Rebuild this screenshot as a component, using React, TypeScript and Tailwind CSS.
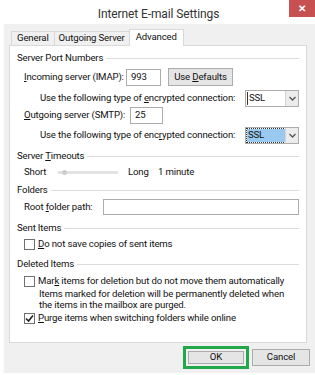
import React from "react";

const font = { fontFamily: 'Roboto, "Noto Sans", sans-serif' };

function U({ children }: { children: React.ReactNode }) {
  return <span className="underline underline-offset-[1px]">{children}</span>;
}

function Header({ children }: { children: React.ReactNode }) {
  return (
    <div className="flex items-center h-[16px]">
      <span className="whitespace-nowrap">{children}</span>
      <div className="flex-1 h-px bg-[#dcdcdc] ml-[3px]" />
    </div>
  );
}

function Select({ focused }: { focused?: boolean }) {
  return (
    <div className="flex w-[54px] h-[17px] border border-[#acacac] bg-white shrink-0">
      <div className="flex-1 flex items-center pl-[1px] py-[1px]">
        {focused ? (
          <div className="w-full h-full bg-[#99c9ef] outline outline-1 outline-dotted outline-[#333] flex items-center pl-[1px] leading-none">
            SSL
          </div>
        ) : (
          <div className="flex items-center h-full border-l border-[#333] pl-[1px] leading-none">SSL</div>
        )}
      </div>
      <div className="w-[13px] bg-[#ececec] border-l border-[#d5d5d5] flex items-center justify-center">
        <svg width="7" height="5" viewBox="0 0 7 5">
          <path d="M0.5 1 L3.5 4 L6.5 1" stroke="#555" strokeWidth="1.3" fill="none" />
        </svg>
      </div>
    </div>
  );
}

function Check({ checked }: { checked?: boolean }) {
  return (
    <div className="w-[11px] h-[11px] border border-[#707070] bg-white flex items-center justify-center shrink-0">
      {checked && (
        <svg width="9" height="9" viewBox="0 0 9 9">
          <path d="M1 4.5 L3.5 7 L8 1.5" stroke="#222" strokeWidth="1.6" fill="none" />
        </svg>
      )}
    </div>
  );
}

export default function App() {
  return (
    <div
      className="w-[315px] h-[375px] bg-white flex flex-col text-[9.6px] tracking-[-0.15px] text-[#111] overflow-hidden whitespace-nowrap"
      style={font}
    >
      <div className="h-[24px] flex items-start relative shrink-0">
        <div className="flex-1 text-center text-[12px] tracking-[-0.1px] text-[#333] pt-[5px] pl-[2px]">
          Internet E-mail Settings
        </div>
        <div className="absolute right-0 top-0 w-[26px] h-[17px] bg-[#c75050] flex items-center justify-center text-white text-[10px] font-bold leading-none">
          ✕
        </div>
      </div>
      <div className="flex-1 ml-[3px] mb-[2px] bg-[#f0f0f0] border-l border-[#fbfbfb] flex flex-col">
        <div className="flex items-end h-[21px] pl-[7px]">
          <div className="h-[14px] px-[5px] flex items-center border border-b-0 border-[#d9d9d9] bg-[#f0f0f0]">General</div>
          <div className="h-[14px] px-[4px] flex items-center border border-b-0 border-l-0 border-[#d9d9d9] bg-[#f0f0f0]">Outgoing Server</div>
          <div className="h-[17px] px-[6px] pb-[2px] flex items-center border border-b-0 border-[#d9d9d9] bg-white relative top-px -ml-px z-10">Advanced</div>
        </div>
        <div className="ml-[5px] w-[298px] h-[298px] border border-[#d9d9d9] bg-white px-[7px] flex flex-col">
          <div className="mt-[4px]">
            <Header>Server Port Numbers</Header>
          </div>
          <div className="mt-[3px] h-[16px] flex items-center pl-[7px]">
            <span className="w-[102px]"><U>I</U>ncoming server (IMAP):</span>
            <div className="w-[35px] h-[17px] border border-[#acacac] flex items-center pl-[4px]">993</div>
            <div className="ml-[7px] w-[65px] h-[18px] border border-[#acacac] bg-[#e5e5e5] flex items-center justify-center">
              Use&nbsp;<U>D</U>efaults
            </div>
          </div>
          <div className="mt-[5px] h-[16px] flex items-center justify-between pl-[23px]">
            <span>Use the following type of <U>e</U>ncrypted connection:</span>
            <Select />
          </div>
          <div className="mt-[1px] h-[16px] flex items-center pl-[7px]">
            <span className="w-[106px]"><U>O</U>utgoing server (SMTP):</span>
            <div className="w-[33px] h-[17px] border border-[#acacac] flex items-center pl-[4px]">25</div>
          </div>
          <div className="mt-[4px] h-[16px] flex items-center justify-between pl-[23px]">
            <span>Use the following type of enc<U>r</U>ypted connection:</span>
            <Select focused />
          </div>
          <div className="mt-[5px]">
            <Header>Server <U>T</U>imeouts</Header>
          </div>
          <div className="h-[16px] flex items-center pl-[7px]">
            <span className="w-[34px]">Short</span>
            <div className="w-[60px] h-[3px] bg-[#e3e3e3] relative">
              <div className="absolute left-[4px] -top-[1px] w-[5px] h-[5px] rounded-full bg-[#cdcdcd]" />
            </div>
            <span className="ml-[10px] w-[30px]">Long</span>
            <span>1 minute</span>
          </div>
          <div className="mt-[2px]">
            <Header>Folders</Header>
          </div>
          <div className="mt-[1px] h-[16px] flex items-center pl-[7px]">
            <span className="w-[79px]">Root <U>f</U>older path:</span>
            <div className="flex-1 h-[16px] border border-[#acacac]" />
          </div>
          <div className="mt-[5px]">
            <Header>Sent Items</Header>
          </div>
          <div className="h-[16px] flex items-center pl-[7px]">
            <Check />
            <span className="ml-[3px]"><U>D</U>o not save copies of sent items</span>
          </div>
          <div className="mt-[4px]">
            <Header>Deleted Items</Header>
          </div>
          <div className="mt-[1px] h-[16px] flex items-center pl-[7px]">
            <Check />
            <span className="ml-[3px]">Mar<U>k</U> items for deletion but do not move them automatically</span>
          </div>
          <div className="-mt-[1px] pl-[22px] leading-[11px]">
            Items marked for deletion will be permanently deleted when
            <br />
            the items in the mailbox are purged.
          </div>
          <div className="h-[16px] flex items-center pl-[7px]">
            <Check checked />
            <span className="ml-[3px]"><U>P</U>urge items when switching folders while online</span>
          </div>
        </div>
        <div className="flex justify-end items-start pr-[5px] pt-[3px] gap-[3px]">
          <div className="w-[66px] h-[23px] border-[3px] border-[#22a74a] flex">
            <div className="flex-1 m-[2px] border border-[#acacac] bg-[#e5e5e5] flex items-center justify-center">OK</div>
          </div>
          <div className="mt-[3px] w-[58px] h-[17px] border border-[#acacac] bg-[#e5e5e5] flex items-center justify-center">Cancel</div>
        </div>
      </div>
    </div>
  );
}
